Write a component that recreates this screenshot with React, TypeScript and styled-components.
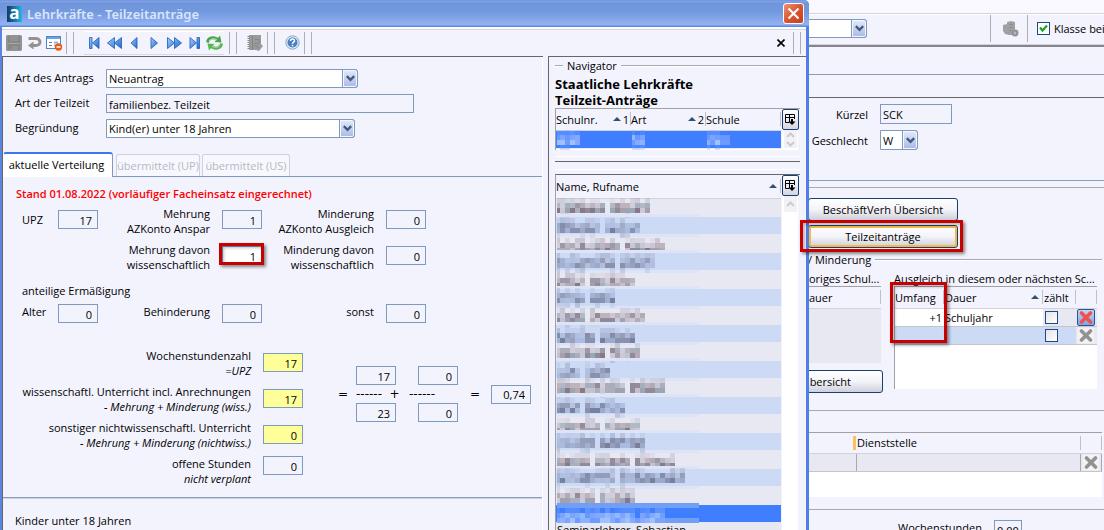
import React, { useId } from "react";
import styled, { createGlobalStyle, css } from "styled-components";

const Global = createGlobalStyle`
  * { box-sizing: border-box; }
  body { margin: 0; background: #f3f3fe; }
  body, input, select, button, table { font: 11px/15px "Open Sans", "Noto Sans", sans-serif; color: #000; }
  h1, h2, p { margin: 0; font-weight: normal; font-size: inherit; }
  button { padding: 0; cursor: pointer; }
  table { border-collapse: collapse; table-layout: fixed; width: 100%; }
  th, td { padding: 0; font-weight: normal; text-align: left; }
`;

const edge = "#7f9abf";

const Desktop = styled.div`
  position: relative;
  height: 100vh;
  overflow: hidden;
  background: #f3f3fe;
`;

/* ---------- shared controls ---------- */

const Box = styled.input<{ $w?: number; $h?: number; $bg?: string; $right?: boolean }>`
  width: ${(p) => p.$w ?? 40}px;
  height: ${(p) => p.$h ?? 19}px;
  padding: 1px ${(p) => (p.$right ? 5 : 2)}px 0;
  border: 1px solid ${edge};
  border-radius: 0;
  background: ${(p) => p.$bg ?? "#f3f3fe"};
  text-align: ${(p) => (p.$right ? "right" : "left")};
  outline: none;
  display: block;
`;

const SelectFrame = styled.span<{ $w: number; $h?: number }>`
  display: grid;
  grid-template-columns: 1fr 16px;
  width: ${(p) => p.$w}px;
  height: ${(p) => p.$h ?? 19}px;
`;

const NativeSelect = styled.select`
  grid-area: 1 / 1 / 2 / 3;
  appearance: none;
  width: 100%;
  height: 100%;
  margin: 0;
  padding: 0 18px 0 2px;
  border: 1px solid ${edge};
  border-radius: 0 3px 3px 0;
  background: #fff;
  outline: none;
`;

const ArrowCap = styled.span`
  grid-area: 1 / 2 / 2 / 3;
  display: flex;
  align-items: center;
  justify-content: center;
  pointer-events: none;
  border: 1px solid ${edge};
  border-radius: 0 3px 3px 0;
  background: linear-gradient(#e3eafb, #a9b9e4);
  box-shadow: inset 0 0 0 1px #f4f7ff;
`;

function Select({ id, value, w, h, label }: { id?: string; value: string; w: number; h?: number; label?: string }) {
  return (
    <SelectFrame $w={w} $h={h}>
      <NativeSelect id={id} aria-label={label} defaultValue={value}>
        <option>{value}</option>
      </NativeSelect>
      <ArrowCap>
        <svg width="9" height="7" viewBox="0 0 9 7">
          <path d="M0.8 1.2 L4.5 4.8 L8.2 1.2" fill="none" stroke="#44597f" strokeWidth="2.4" />
        </svg>
      </ArrowCap>
    </SelectFrame>
  );
}

const Highlight = styled.span<{ $inset: string }>`
  position: absolute;
  inset: ${(p) => p.$inset};
  border: 3px solid #c80000;
  box-shadow: 2px 2px 3px rgba(0, 0, 0, 0.45), inset 2px 2px 3px rgba(0, 0, 0, 0.25);
  pointer-events: none;
  z-index: 3;
`;

const Anchor = styled.div`
  position: relative;
`;

/* ---------- dialog window ---------- */

const Dialog = styled.section`
  position: absolute;
  z-index: 2;
  top: 0;
  left: 0;
  width: calc(100% - 295px);
  height: 100%;
  display: flex;
  flex-direction: column;
  background: #f3f3fe;
  border-left: 2px solid #5a86e0;
  border-right: 3px solid #4f7fe4;
  border-radius: 0 5px 0 0;
`;

const TitleBar = styled.header`
  flex: none;
  display: flex;
  align-items: center;
  gap: 5px;
  height: 27px;
  margin: 0 -3px 0 -2px;
  padding: 0 5px 0 7px;
  border-radius: 0 5px 0 0;
  background: linear-gradient(#5f8ae2 0, #86a6e8 1px, #7095db 3px, #7298de 12px, #8dadee 22px, #94b2f0 25px, #5b89e6 26px);
`;

const Logo = styled.span`
  width: 15px;
  height: 16px;
  background: linear-gradient(90deg, #123a63, #1a6ea0 45%, #20b8ea);
  color: #fff;
  font: bold 17px/13px "Open Sans", sans-serif;
  text-align: center;
`;

const Title = styled.h1`
  flex: 1;
  color: #d9e5fc;
  font: 600 13px/16px "Noto Sans", sans-serif;
`;

const CloseButton = styled.button`
  display: grid;
  place-items: center;
  width: 21px;
  height: 21px;
  border: 1px solid #fff;
  border-radius: 3px;
  background: linear-gradient(135deg, #ee9478, #dd5330 50%, #c43f1e);
`;

const Toolbar = styled.div`
  flex: none;
  display: flex;
  align-items: center;
  height: 29px;
  padding-left: 2px;
  border-top: 2px solid #fff;
  box-shadow: inset 0 1px #d4d6dc;
`;

const ToolGroup = styled.div<{ $before?: number; $after?: number; $lined?: boolean }>`
  display: flex;
  align-items: center;
  height: 22px;
  margin: 0 ${(p) => p.$after ?? 2}px 0 ${(p) => p.$before ?? 0}px;
  ${(p) => p.$lined && css`box-shadow: 0 1px #d8d8e2, 0 -1px #fff;`}
`;

const ToolButton = styled.button`
  display: grid;
  place-items: center;
  width: 20px;
  height: 20px;
  border: 0;
  background: none;
`;

const Grip = styled.span`
  width: 8px;
  height: 22px;
  border: solid #aeaeb6;
  border-width: 0 1px;
`;

const Spacer = styled.span`
  flex: 1;
`;

const Columns = styled.div`
  flex: 1;
  min-height: 0;
  display: grid;
  grid-template-columns: minmax(0, 1fr) 258px;
  gap: 5px;
`;

const FormPane = styled.div`
  overflow: hidden;
  border: solid #66666c;
  border-width: 1px 0 0 1px;
  box-shadow: inset -1px 0 #fff;
`;

const HeadForm = styled.div`
  display: grid;
  grid-template-columns: 91px auto;
  justify-content: start;
  row-gap: 6px;
  padding: 12px 0 14px 12px;
  label { line-height: 17px; }
`;

const Tabs = styled.div`
  display: flex;
  align-items: flex-end;
  gap: 2px;
  height: 25px;
  margin-right: 1px;
  box-shadow: inset 0 -1px ${edge};
`;

const Tab = styled.button<{ $active?: boolean; $w: number }>`
  width: ${(p) => p.$w}px;
  height: ${(p) => (p.$active ? 25 : 22)}px;
  margin: ${(p) => (p.$active ? "0 1px 0 0" : "0 0 1px")};
  padding: ${(p) => (p.$active ? "0 3px 2px 0" : "0")};
  border: 1px solid ${(p) => (p.$active ? edge : "#d0d0dc")};
  border-top: ${(p) => (p.$active ? "2px solid #3b78ee" : "1px solid #d0d0dc")};
  border-bottom: 0;
  border-left-color: ${(p) => (p.$active ? "#fff" : "#d0d0dc")};
  border-radius: 3px 3px 0 0;
  background: ${(p) => (p.$active ? "#fff" : "#f7f7ff")};
  color: ${(p) => (p.$active ? "#000" : "#b8b8be")};
  white-space: nowrap;
`;

const TabBody = styled.div`
  padding: 9px 0 11px 13px;
  margin-right: 1px;
  border-bottom: 1px solid #8d9dbb;
  box-shadow: 0 1px #ccd2e4;
`;

const Notice = styled.p`
  color: #f00;
  font-weight: 600;
`;

const Figures = styled.div`
  display: grid;
  grid-template-columns: 36px 40px 112px 12px 40px 112px 12px 40px;
  padding-left: 6px;
`;

const FigureLabel = styled.label<{ $right?: boolean }>`
  text-align: ${(p) => (p.$right ? "right" : "left")};
  white-space: nowrap;
`;

const FigureRow = styled.div<{ $top?: number; $h: number }>`
  grid-column: 1 / -1;
  display: grid;
  grid-template-columns: subgrid;
  height: ${(p) => p.$h}px;
  margin-top: ${(p) => p.$top ?? 0}px;
`;

const Cell = styled.div<{ $col: number; $label?: boolean; $drop?: number }>`
  grid-column: ${(p) => p.$col};
  padding-top: ${(p) => p.$drop ?? 0}px;
  display: flex;
  justify-content: ${(p) => (p.$label && p.$col > 1 ? "flex-end" : "flex-start")};
  align-items: flex-start;
`;

const GroupTitle = styled.p`
  grid-column: 1 / -1;
  height: 22px;
  padding-top: 5px;
`;

const Sums = styled.div`
  display: flex;
  margin-top: 24px;
`;

const SumList = styled.div`
  display: grid;
  grid-template-columns: 235px 40px;
  grid-template-rows: 36px 36px 36px 30px;
  column-gap: 12px;
  label { text-align: right; white-space: nowrap; }
  input { margin-top: 5px; }
  input:last-child { margin-top: 0; }
  label em { display: block; }
`;

const Formula = styled.div`
  display: grid;
  grid-template-columns: 18px 40px 22px 40px 12px 21px 40px;
  grid-template-rows: 19px 18px 19px;
  align-items: center;
  margin: 18px 0 0 35px;
  height: 56px;
`;

const Sign = styled.span<{ $col: number }>`
  grid-area: 2 / ${(p) => p.$col};
  white-space: nowrap;
  font: 12px/18px "DejaVu Sans", sans-serif;
`;

const DashSign = styled(Sign)`
  padding-left: 13px;
`;

const Slot = styled.span<{ $row: number; $col: number }>`
  grid-area: ${(p) => p.$row} / ${(p) => p.$col};
  display: flex;
  align-items: center;
`;

const Footnote = styled.p`
  padding: 15px 0 0 12px;
`;

/* ---------- navigator ---------- */

const NavPane = styled.aside`
  min-height: 0;
  overflow: hidden;
  padding: 0 6px;
  border: solid #66666c;
  border-width: 1px 0 0 1px;
`;

const Legend = styled.div`
  display: flex;
  align-items: center;
  gap: 4px;
  height: 17px;
  white-space: nowrap;
  &::before, &::after { content: ""; height: 1px; background: #a8a8b0; box-shadow: 0 1px #fff; }
  &::before { width: 8px; }
  &::after { flex: 1; }
`;

const NavHeading = styled.h2`
  padding: 2px 0 0;
  font: bold 13px/16px "Open Sans", sans-serif;
`;

const ListFrame = styled.div<{ $h?: number; $dark?: boolean }>`
  display: flex;
  ${(p) => p.$h && css`height: ${p.$h}px;`}
  border: solid #a0a0a8;
  border-width: 1px 0 0 1px;
  border-top-color: ${(p) => (p.$dark ? "#66666c" : "#a0a0a8")};
  background: #fff;
  overflow: hidden;
`;

const ListBody = styled.div`
  flex: 1;
  min-width: 0;
`;

const Th = styled.th<{ $w?: number; $h?: number }>`
  ${(p) => p.$w && css`width: ${p.$w}px;`}
  height: ${(p) => p.$h ?? 21}px;
  background: #f3f3fe;
  border-bottom: 1px solid #d2d2da;
  white-space: nowrap;
`;

const ThInner = styled.span<{ $indent?: boolean }>`
  display: flex;
  align-items: center;
  height: 14px;
  padding: 0 1px 0 ${(p) => (p.$indent ? 1 : 0)}px;
  border-right: 1px solid #c0c0c8;
  svg { margin-left: auto; margin-right: 2px; }
`;

const ListTd = styled.td<{ $tone: string }>`
  height: 18px;
  padding-left: 1px;
  line-height: 14px;
  vertical-align: top;
  background: ${(p) => p.$tone};
  border-bottom: 1px solid #e8e8f2;
`;

const SideRail = styled.div`
  width: 19px;
  display: flex;
  flex-direction: column;
  align-items: center;
  background: #fff;
  box-shadow: inset 1px 0 #f3f3fe, inset -2px 0 #f3f3fe;
`;

const PickButton = styled.button`
  width: 17px;
  height: 21px;
  display: grid;
  place-items: center;
  border: 1px solid #173f77;
  border-radius: 2px;
  background: linear-gradient(#fff, #d6d6e2);
`;

const Scroll = styled.button<{ $tall?: boolean }>`
  display: grid;
  place-items: center;
  width: 13px;
  height: ${(p) => (p.$tall ? 16 : 9)}px;
  border: 0;
  background: #f2f2f6;
`;

const Divider = styled.hr<{ $h: number }>`
  height: ${(p) => p.$h}px;
  margin: 0;
  border: 0;
  border-bottom: 1px solid #66666c;
  background: linear-gradient(#fff, #fff) 0 60% / 100% 1px no-repeat;
`;

const Gap = styled.div`
  height: 12px;
  background: linear-gradient(#fff, #fff) 0 60% / 100% 1px no-repeat;
`;

const Mosaic = styled.svg`
  display: block;
  overflow: visible;
`;

const tones = {
  grey: ["#c3c1ce", "#a7a0ab", "#8f8b9c", "#b8a9b2", "#9aa5b5", "#85798a", "#cbc9d6", "#a8b0bd"],
  blue: ["#a4b0cf", "#8791b0", "#b3bedb", "#8d90ad", "#9cabcc", "#76809f", "#a9bbdf", "#98a0bc"],
  picked: ["#78a5ff", "#8fb2ff", "#6e9bff", "#9fc2ff", "#86aaff"],
};

type Tone = keyof typeof tones;

function noise(a: number, b: number, c: number) {
  const v = Math.sin(a * 12.9898 + b * 78.233 + c * 37.719) * 43758.5453;
  return v - Math.floor(v);
}

function MaskedText({ words, tone, row, w = 142 }: { words: number[][]; tone: Tone; row: number; w?: number }) {
  const top = 4 + 5 * Math.ceil(3.6 * row) - 18 * row;
  const palette = tones[tone];
  const cells: React.ReactNode[] = [];
  words.forEach(([from, to]) => {
    for (let i = from; i < to; i++) {
      for (let k = -1; k < 3; k++) {
        const n = noise(i, k + 2, row + 1);
        const faint = k === -1 || k === 2;
        if (k === 2 && (n < 0.75 || top > 6)) continue;
        if (k === -1 && n < 0.4 && i !== from) continue;
        cells.push(
          <rect
            key={`${i}-${k}`}
            x={i === 0 ? 0 : 5 * i - 2}
            y={top + 5 * k}
            width={i === 0 ? 3 : 5}
            height={5}
            fill={palette[Math.floor(noise(k + 5, i, row) * palette.length)]}
            opacity={faint ? 0.3 : k === 0 ? 0.85 : 1}
          />
        );
      }
    }
  });
  return (
    <Mosaic width={w} height={17} aria-hidden="true" shapeRendering="crispEdges">
      {tone === "blue" && <path d={`M0 -3H${w}V0H0ZM0 17H${w}V20H0Z`} fill="#dde4f5" />}
      {tone === "picked" && w > 100 && <path d={`M0 -2H${w}V3H0ZM0 13H${w}V18H0Z`} fill="#729ff6" />}
      {cells}
    </Mosaic>
  );
}

const people = [
  [[0, 10], [11, 19]],
  [[0, 9], [10, 17]],
  [[0, 13], [14, 22]],
  [[0, 12], [13, 20]],
  [[0, 6], [7, 16]],
  [[0, 6], [7, 12]],
  [[0, 6], [7, 18]],
  [[0, 8], [9, 16]],
  [[0, 10], [11, 17]],
  [[0, 5], [6, 11]],
  [[0, 14], [15, 22]],
  [[0, 5], [6, 14]],
  [[0, 9], [10, 17]],
  [[0, 8], [9, 18]],
  [[0, 7], [8, 15], [16, 24]],
  [[0, 12], [13, 26]],
  [[0, 8], [9, 16]],
  [[0, 16], [17, 22]],
];

const SortMark = () => (
  <svg width="8" height="4" viewBox="0 0 8 4"><path d="M0 4L4 0L8 4Z" fill="#34506c" /></svg>
);

const PickIcon = () => (
  <svg width="11" height="12" viewBox="0 0 11 12">
    <path d="M4.5 8.5H.5V.5H9.5V5M.5 3.5H9.5M4.500 .5V8" fill="none" stroke="#000" />
    <path d="M3.500 7.500H10.500L7 11Z M6 5H8V8H6Z" fill="#000" />
  </svg>
);

const Chevron = ({ down }: { down?: boolean }) => (
  <svg width="9" height="6" viewBox="0 0 9 6">
    <path d={down ? "M1 1L4.5 4.5L8 1" : "M1 5L4.5 1.5L8 5"} fill="none" stroke="#cccccf" strokeWidth="2" />
  </svg>
);

/* ---------- toolbar icons ---------- */

const navShapes: Record<string, string> = {
  "Erster Datensatz": "M2.500 1.500H5V12.500H2.500Z M12 1.500V12.500L5.500 7Z",
  "Schnell zurück": "M7.500 1.500V12.500L.5 7Z M14.500 1.500V12.500L7.500 7Z",
  "Zurück": "M10 1.500V12.500L4 7Z",
  "Vor": "M4 1.500V12.500L10.500 7Z",
  "Schnell vor": "M.5 1.500V12.500L7.500 7Z M7.500 1.500V12.500L14.500 7Z",
  "Letzter Datensatz": "M10 1.500H12.500V12.500H10Z M3 1.500V12.500L9.500 7Z",
};

const NavIcon = ({ d }: { d: string }) => (
  <svg width="15" height="14" viewBox="0 0 15 14">
    <defs>
      <linearGradient id="navBlue" x1="0" y1="0" x2="1" y2="1">
        <stop offset="0" stopColor="#a4d4fb" />
        <stop offset="1" stopColor="#1c63c8" />
      </linearGradient>
    </defs>
    <path d={d} fill="url(#navBlue)" stroke="#2a66c0" strokeWidth=".9" strokeLinejoin="round" />
  </svg>
);

const SaveIcon = () => (
  <svg width="16" height="16" viewBox="0 0 16 16">
    <path d="M1 0H15L16 1V15L15 16H1L0 15V1Z" fill="#939393" />
    <path d="M3 1V7H13V1M3 15V10H13V15M5 11V14" fill="none" stroke="#7c7c7c" />
    <path d="M3.500 8.500H12.500" stroke="#a9a9a9" />
  </svg>
);

const UndoIcon = () => (
  <svg width="15" height="14" viewBox="0 0 15 14">
    <path d="M1.500 2.500H8.500C14.500 2.500 14.500 9.500 8.500 9.500H5" fill="none" stroke="#929292" strokeWidth="3" />
    <path d="M6.500 5.500V13.500L1 9.500Z" fill="#929292" />
  </svg>
);

const FormIcon = () => (
  <svg width="17" height="16" viewBox="0 0 17 16">
    <rect x=".5" y="1.500" width="14" height="12" fill="#fff" stroke="#4b86cc" />
    <path d="M1 3H14" stroke="#6aa3e2" strokeWidth="2" />
    <path d="M3 7.500H6M3 10.500H6" stroke="#5580b5" />
    <path d="M8 7.500H12M8 10.500H10" stroke="#8fb6e2" strokeWidth="2" />
    <circle cx="12.500" cy="12" r="3.700" fill="#ea5a15" />
    <path d="M10.500 12H14.500" stroke="#fff" strokeWidth="1.500" />
  </svg>
);

const RefreshIcon = () => (
  <svg width="17" height="16" viewBox="0 0 17 16">
    <path d="M1.500 7.500C2 2.500 8 1.500 11.500 4.500" fill="none" stroke="#4aa64d" strokeWidth="3" />
    <path d="M8.500 7L15.500 7.500L14 .5Z" fill="#4aa64d" />
    <path d="M15.500 8.500C15 13.500 9 14.500 5.500 11.500" fill="none" stroke="#58b455" strokeWidth="3" />
    <path d="M8.500 9L1.500 8.500L3 15.500Z" fill="#58b455" />
    <path d="M3 6C4.500 3.500 8.500 3 11 5M14 10.500C12.500 12.500 8.500 13 6 11" fill="none" stroke="#b9e4b0" strokeWidth="1" />
  </svg>
);

const BookIcon = () => (
  <svg width="16" height="16" viewBox="0 0 16 16">
    <path d="M2 0H14V9L16 11L12 16L9 15H2Z" fill="#9a9a9a" />
    <path d="M1.500 1V15" stroke="#878787" strokeWidth="2" strokeDasharray="1 1" />
    <path d="M5.500 1V15M8 4.500H12V8M8 8.500H11M8 10.500L12 13" fill="none" stroke="#848484" />
  </svg>
);

const HelpIcon = () => (
  <svg width="15" height="15" viewBox="0 0 15 15">
    <circle cx="7.500" cy="7.500" r="6.700" fill="#dfeaf6" stroke="#86a8cd" />
    <circle cx="7.500" cy="7.500" r="5" fill="#4880c0" />
    <path d="M5.500 6C5.500 3.500 9.500 3.500 9.500 5.800C9.500 7 7.500 7.200 7.500 8.700M7.500 9.800V11.200" fill="none" stroke="#fff" strokeWidth="1.500" />
  </svg>
);

/* ---------- main window behind the dialog ---------- */

const Main = styled.main`
  width: 304px;
  margin-left: auto;
`;

const MenuStrip = styled.div`
  height: 14px;
  background: #f9f9ff;
  border-bottom: 1px solid #d3d4da;
`;

const MainTools = styled.div`
  display: flex;
  align-items: center;
  height: 33px;
  padding-bottom: 2px;
  border-bottom: 2px solid #85858b;
  box-shadow: inset 0 -1px #d3d3df, inset 0 1px #fff;
`;

const ClassLabel = styled.label`
  display: flex;
  align-items: center;
  gap: 4px;
  width: 67px;
  margin-left: 9px;
  white-space: nowrap;
`;

const Rule = styled.div<{ $h: number; $c: string }>`
  height: ${(p) => p.$h}px;
  border-bottom: 1px solid ${(p) => p.$c};
`;

const ThinSep = styled.span`
  width: 1px;
  height: 27px;
  background: #aeaeb6;
`;

const Tick = styled.input`
  appearance: none;
  display: block;
  width: 13px;
  height: 13px;
  margin: 0;
  border: 1px solid #1d4a80;
  background: linear-gradient(135deg, #e4e4e8, #fff);
  &:checked { background: #fff; }
`;

const TickFrame = styled.span`
  display: grid;
  place-items: center;
  width: 13px;
  flex: none;
  > * { grid-area: 1 / 1; }
  svg { pointer-events: none; }
`;

const PersonForm = styled.div`
  display: grid;
  grid-template-columns: 68px auto;
  column-gap: 12px;
  row-gap: 6px;
  align-items: center;
  justify-content: start;
  height: 83px;
  padding-top: 6px;
  align-content: start;
  border-bottom: 1px solid #8aa0bd;
  > label { text-align: right; }
`;

const Actions = styled.div`
  display: flex;
  flex-direction: column;
  align-items: flex-start;
  gap: 4px;
  padding: 10px 0 0 8px;
`;

const PushButton = styled.button<{ $hot?: boolean; $w: number; $tail?: number }>`
  display: block;
  width: ${(p) => p.$w}px;
  height: 23px;
  border: 1px solid #17406f;
  border-radius: 3px;
  background: linear-gradient(#fff, #f3f3f9 50%, #cfcfdb);
  ${(p) => p.$hot && css`box-shadow: inset 0 0 0 2px #f3b94e;`}
  ${(p) => p.$tail && css`padding-right: ${p.$tail}px; text-align: right;`}
`;

const GroupLegend = styled.div`
  display: flex;
  align-items: center;
  gap: 4px;
  height: 23px;
  padding: 0 2px 0 8px;
  white-space: nowrap;
  &::after { content: ""; flex: 1; height: 1px; background: #a8a8b0; box-shadow: 0 1px #fff; }
`;

const Pair = styled.div`
  display: grid;
  grid-template-columns: 73px 203px;
  column-gap: 13px;
  padding-left: 8px;
`;

const Caption = styled.div<{ $indent?: boolean }>`
  height: 15px;
  padding-left: ${(p) => (p.$indent ? 1 : 0)}px;
  white-space: nowrap;
`;

const Panel = styled.div<{ $h: number; $bg?: string; $left?: boolean }>`
  height: ${(p) => p.$h}px;
  border-top: 1px solid #a0a0a8;
  border-left: ${(p) => (p.$left ? "1px solid #a0a0a8" : 0)};
  background: ${(p) => p.$bg ?? "#fff"};
`;

const Td = styled.td<{ $bg?: string; $right?: boolean; $indent?: boolean }>`
  height: 18px;
  padding-right: ${(p) => (p.$right ? 2 : 0)}px;
  padding-left: ${(p) => (p.$indent ? 1 : 0)}px;
  background: ${(p) => p.$bg ?? "#fff"};
  text-align: ${(p) => (p.$right ? "right" : "left")};
  border-bottom: 1px solid #c4c4cc;
  input { margin-left: 2px; }
`;

const LinedTd = styled(Td)`
  border-right: 1px solid #a8a8b0;
`;

const DeleteButton = styled.button<{ $on?: boolean }>`
  display: grid;
  place-items: center;
  width: 18px;
  height: 17px;
  margin-left: 1px;
  border: 1px solid ${(p) => (p.$on ? "#2c558f" : "#ececf0")};
  border-radius: 2px;
  background: ${(p) => (p.$on ? "linear-gradient(#c4d6f6, #7ea5e6)" : "#f3f3f6")};
`;

const Cross = ({ c }: { c: string }) => (
  <svg width="14" height="13" viewBox="0 0 14 13">
    <path d="M2.500 2L11.500 11M11.500 2L2.500 11" stroke={c} strokeWidth="3.600" strokeLinecap="round" />
  </svg>
);

const OverviewRow = styled.div`
  display: flex;
  height: 23px;
  margin-top: -19px;
`;

const Place = styled.div`
  padding: 21px 2px 12px 8px;
`;

const PlaceMark = styled.span`
  display: block;
  width: 3px;
  height: 14px;
  margin-left: auto;
  background: #ffc15e;
`;

const Hours = styled.div`
  display: flex;
  justify-content: flex-end;
  gap: 12px;
  padding: 10px 82px 0 0;
`;

function Figure({ label, value, col, white, mark, drop }: { label: React.ReactNode; value: string; col: number; white?: boolean; mark?: boolean; drop?: number }) {
  const id = useId();
  return (
    <>
      <Cell $col={col} $label $drop={drop}>
        <FigureLabel htmlFor={id} $right={col > 1}>{label}</FigureLabel>
      </Cell>
      <Cell $col={col === 1 ? 2 : col + 2} $drop={4}>
        <Anchor>
          <Box id={id} defaultValue={value} $right $bg={white ? "#fff" : undefined} />
          {mark && <Highlight $inset="-3px -2px 0 -3px" />}
        </Anchor>
      </Cell>
    </>
  );
}

function Sum({ title, note, value, yellow }: { title: string; note: string; value: string; yellow?: boolean }) {
  const id = useId();
  return (
    <>
      <label htmlFor={id}>{title}<em>{note}</em></label>
      <Box id={id} defaultValue={value} $right $bg={yellow ? "#ffff99" : undefined} />
    </>
  );
}

function MainWindow() {
  return (
    <Main>
      <MenuStrip />
      <MainTools>
        <Select value="" w={67} label="Auswahl" />
        <Spacer />
        <ThinSep />
        <ToolGroup $before={10} $after={6}>
          <ToolButton aria-label="Daten">
            <svg width="16" height="16" viewBox="0 0 16 16">
              <path d="M4 1L8 0L12 1V14L6 14L2 13L0 10V4L4 3Z" fill="#a0a0a3" />
              <path d="M6 3.500H10M6 6.500H10M6 9.500H9" stroke="#8d8d90" />
              <circle cx="12" cy="12" r="3.500" fill="#959598" />
              <circle cx="12" cy="12" r="1.200" fill="#b8b8ba" />
            </svg>
          </ToolButton>
        </ToolGroup>
        <ThinSep />
        <ClassLabel>
          <TickFrame>
            <Tick type="checkbox" defaultChecked />
            <svg width="9" height="9" viewBox="0 0 9 9"><path d="M1 3.500L3.500 6.500L8 1.500" fill="none" stroke="#21a121" strokeWidth="2.200" /></svg>
          </TickFrame>
          Klasse bei
        </ClassLabel>
      </MainTools>
      <Rule $h={28} $c="#8c9cb4" />
      <Rule $h={23} $c="#66666c" />
      <PersonForm>
        <label htmlFor="kuerzel">Kürzel</label>
        <Box id="kuerzel" $w={72} $h={20} defaultValue="SCK" />
        <label htmlFor="geschlecht">Geschlecht</label>
        <Select id="geschlecht" value="W" w={38} h={20} />
      </PersonForm>
      <Rule $h={7} $c="#a8a8b0" />
      <Actions>
        <PushButton $w={150}>BeschäftVerh Übersicht</PushButton>
        <Anchor>
          <PushButton $w={150} $hot>Teilzeitanträge</PushButton>
          <Highlight $inset="-5px -5px -4px -8px" />
        </Anchor>
      </Actions>
      <GroupLegend>/ Minderung</GroupLegend>
      <Pair>
        <div>
          <Caption $indent>origes Schul...</Caption>
          <Panel $h={77} $bg="#e8e8f2">
            <table>
              <thead><tr><Th><ThInner $indent>auer</ThInner></Th></tr></thead>
            </table>
          </Panel>
        </div>
        <Anchor>
          <Caption>Ausgleich in diesem oder nächsten Sc...</Caption>
          <Panel $h={103} $left>
            <table>
              <thead>
                <tr>
                  <Th $w={49}><ThInner>Umfang</ThInner></Th>
                  <Th><ThInner $indent>Dauer<SortMark /></ThInner></Th>
                  <Th $w={33}><ThInner $indent>zählt</ThInner></Th>
                  <Th $w={21}><ThInner /></Th>
                </tr>
              </thead>
              <tbody>
                <tr>
                  <Td $right>+1</Td>
                  <Td $indent>Schuljahr</Td>
                  <Td $bg="#e8e8f2"><Tick type="checkbox" aria-label="zählt" /></Td>
                  <Td $bg="#e8e8f2"><DeleteButton $on aria-label="Löschen"><Cross c="#f0504e" /></DeleteButton></Td>
                </tr>
                <tr>
                  <Td $bg="#ccdaf6" />
                  <Td $bg="#ccdaf6" />
                  <Td $bg="#ccdaf6"><Tick type="checkbox" aria-label="zählt" /></Td>
                  <Td $bg="#e8e8f2"><DeleteButton aria-label="Löschen"><Cross c="#929292" /></DeleteButton></Td>
                </tr>
              </tbody>
            </table>
          </Panel>
          <Highlight $inset="11px 150px 46px -4px" />
        </Anchor>
      </Pair>
      <OverviewRow>
        <PushButton $w={83} $tail={31}>bersicht</PushButton>
      </OverviewRow>
      <Rule $h={18} $c="#a8a8b0" />
      <Place>
        <Panel $h={65}>
          <table>
            <thead>
              <tr>
                <Th $h={20} $w={48}><PlaceMark /></Th>
                <Th $h={20}><ThInner $indent>Dienststelle</ThInner></Th>
                <Th $h={20} $w={21}><ThInner /></Th>
              </tr>
            </thead>
            <tbody>
              <tr>
                <LinedTd $bg="#e8e8f2" />
                <LinedTd $bg="#e8e8f2" />
                <LinedTd $bg="#e8e8f2"><DeleteButton aria-label="Löschen"><Cross c="#929292" /></DeleteButton></LinedTd>
              </tr>
            </tbody>
          </table>
        </Panel>
      </Place>
      <Rule $h={1} $c="#a8a8b0" />
      <Hours>
        <label htmlFor="wochen">Wochenstunden</label>
        <Box id="wochen" $w={28} defaultValue="0,00" />
      </Hours>
    </Main>
  );
}

function Navigator() {
  return (
    <NavPane>
      <Legend>Navigator</Legend>
      <NavHeading>Staatliche Lehrkräfte<br />Teilzeit-Anträge</NavHeading>
      <ListFrame $h={42}>
        <ListBody>
          <table>
            <thead>
              <tr>
                <Th><ThInner>Schulnr.<SortMark />1</ThInner></Th>
                <Th><ThInner>Art<SortMark />2</ThInner></Th>
                <Th><ThInner>Schule</ThInner></Th>
              </tr>
            </thead>
            <tbody>
              <tr>
                {[5, 3, 5].map((n, i) => (
                  <ListTd key={i} $tone="#3f7fff"><MaskedText words={[[0, n]]} tone="picked" row={5 * i} w={40} /></ListTd>
                ))}
              </tr>
            </tbody>
          </table>
        </ListBody>
        <SideRail>
          <PickButton aria-label="Spalten"><PickIcon /></PickButton>
          <Scroll aria-label="Hoch"><Chevron /></Scroll>
          <Scroll aria-label="Runter"><Chevron down /></Scroll>
        </SideRail>
      </ListFrame>
      <Divider $h={12} />
      <Gap />
      <ListFrame $dark>
        <ListBody>
          <table>
            <thead><tr><Th $h={23}><ThInner>Name, Rufname<SortMark /></ThInner></Th></tr></thead>
            <tbody>
              {people.map((words, r) => {
                const tone: Tone = r === 17 ? "picked" : r % 2 ? "blue" : "grey";
                const bg = { grey: "#e8e8f2", blue: "#ccdaf6", picked: "#3f7fff" }[tone];
                return (
                  <tr key={r}>
                    <ListTd $tone={bg}><MaskedText words={words} tone={tone} row={r} /></ListTd>
                  </tr>
                );
              })}
              <tr><ListTd $tone="#e8e8f2">Seminarlehrer, Sebastian</ListTd></tr>
            </tbody>
          </table>
        </ListBody>
        <SideRail>
          <PickButton aria-label="Spalten"><PickIcon /></PickButton>
          <Scroll $tall aria-label="Hoch"><Chevron /></Scroll>
        </SideRail>
      </ListFrame>
    </NavPane>
  );
}

export default function App() {
  return (
    <Desktop>
      <Global />
      <MainWindow />
      <Dialog>
        <TitleBar>
          <Logo>a</Logo>
          <Title>Lehrkräfte - Teilzeitanträge</Title>
          <CloseButton aria-label="Schließen">
            <svg width="13" height="13" viewBox="0 0 13 13"><path d="M1.500 1.500L11.500 11.500M11.500 1.500L1.500 11.500" stroke="#fff" strokeWidth="2.200" /></svg>
          </CloseButton>
        </TitleBar>
        <Toolbar>
          <ToolGroup>
            <ToolButton aria-label="Speichern"><SaveIcon /></ToolButton>
            <ToolButton aria-label="Rückgängig"><UndoIcon /></ToolButton>
            <ToolButton aria-label="Formular"><FormIcon /></ToolButton>
          </ToolGroup>
          <Grip />
          <ToolGroup $before={10} $after={5} $lined>
            {Object.entries(navShapes).map(([name, d]) => (
              <ToolButton key={name} aria-label={name}><NavIcon d={d} /></ToolButton>
            ))}
            <ToolButton aria-label="Aktualisieren"><RefreshIcon /></ToolButton>
          </ToolGroup>
          <Grip />
          <ToolGroup $before={8} $after={2}>
            <ToolButton aria-label="Notizbuch"><BookIcon /></ToolButton>
          </ToolGroup>
          <Grip />
          <ToolGroup $before={7}>
            <ToolButton aria-label="Hilfe"><HelpIcon /></ToolButton>
          </ToolGroup>
          <Grip />
          <Spacer />
          <ToolGroup>
            <ToolButton aria-label="Leiste schließen">
              <svg width="8" height="8" viewBox="0 0 8 8"><path d="M.5 .5L7.500 7.500M7.500 .5L.5 7.500" stroke="#000" strokeWidth="1.600" /></svg>
            </ToolButton>
          </ToolGroup>
          <Grip />
          <ToolGroup $after={5} />
        </Toolbar>
        <Columns>
          <FormPane>
            <HeadForm>
              <label htmlFor="art">Art des Antrags</label>
              <Select id="art" value="Neuantrag" w={252} />
              <label htmlFor="teilzeit">Art der Teilzeit</label>
              <Box id="teilzeit" $w={308} defaultValue="familienbez. Teilzeit" />
              <label htmlFor="grund">Begründung</label>
              <Select id="grund" value="Kind(er) unter 18 Jahren" w={249} />
            </HeadForm>
            <Tabs role="tablist">
              <Tab role="tab" aria-selected $active $w={110}>aktuelle Verteilung</Tab>
              <Tab role="tab" $w={84}>übermittelt (UP)</Tab>
              <Tab role="tab" $w={88}>übermittelt (US)</Tab>
            </Tabs>
            <TabBody>
              <Notice>Stand 01.08.2022 (vorläufiger Facheinsatz eingerechnet)</Notice>
              <Figures>
                <FigureRow $h={36} $top={5}>
                  <Figure col={1} label="UPZ" value="17" drop={6} />
                  <Figure col={3} label={<>Mehrung<br />AZKonto Anspar</>} value="1" />
                  <Figure col={6} label={<>Minderung<br />AZKonto Ausgleich</>} value="0" />
                </FigureRow>
                <FigureRow $h={36}>
                  <Figure col={3} label={<>Mehrung davon<br />wissenschaftlich</>} value="1" white mark />
                  <Figure col={6} label={<>Minderung davon<br />wissenschaftlich</>} value="0" />
                </FigureRow>
                <GroupTitle>anteilige Ermäßigung</GroupTitle>
                <FigureRow $h={24}>
                  <Figure col={1} label="Alter" value="0" drop={4} />
                  <Figure col={3} label="Behinderung" value="0" drop={4} />
                  <Figure col={6} label="sonst" value="0" drop={4} />
                </FigureRow>
              </Figures>
              <Sums>
                <SumList>
                  <Sum title="Wochenstundenzahl" note="=UPZ" value="17" yellow />
                  <Sum title="wissenschaftl. Unterricht incl. Anrechnungen" note="- Mehrung + Minderung (wiss.)" value="17" yellow />
                  <Sum title="sonstiger nichtwissenschaftl. Unterricht" note="- Mehrung + Minderung (nichtwiss.)" value="0" yellow />
                  <Sum title="offene Stunden" note="nicht verplant" value="0" />
                </SumList>
                <Formula>
                  <Sign $col={1}>=</Sign>
                  <Slot $row={1} $col={2}><Box aria-label="Zähler 1" defaultValue="17" $right /></Slot>
                  <Sign $col={2}>------&nbsp;&nbsp;+</Sign>
                  <Slot $row={3} $col={2}><Box aria-label="Nenner 1" defaultValue="23" $right /></Slot>
                  <Slot $row={1} $col={4}><Box aria-label="Zähler 2" defaultValue="0" $right /></Slot>
                  <DashSign $col={3}>------</DashSign>
                  <Slot $row={3} $col={4}><Box aria-label="Nenner 2" defaultValue="0" $right /></Slot>
                  <Sign $col={6}>=</Sign>
                  <Slot $row={2} $col={7}><Box aria-label="Ergebnis" defaultValue="0,74" $right /></Slot>
                </Formula>
              </Sums>
            </TabBody>
            <Footnote>Kinder unter 18 Jahren</Footnote>
          </FormPane>
          <Navigator />
        </Columns>
      </Dialog>
    </Desktop>
  );
}
